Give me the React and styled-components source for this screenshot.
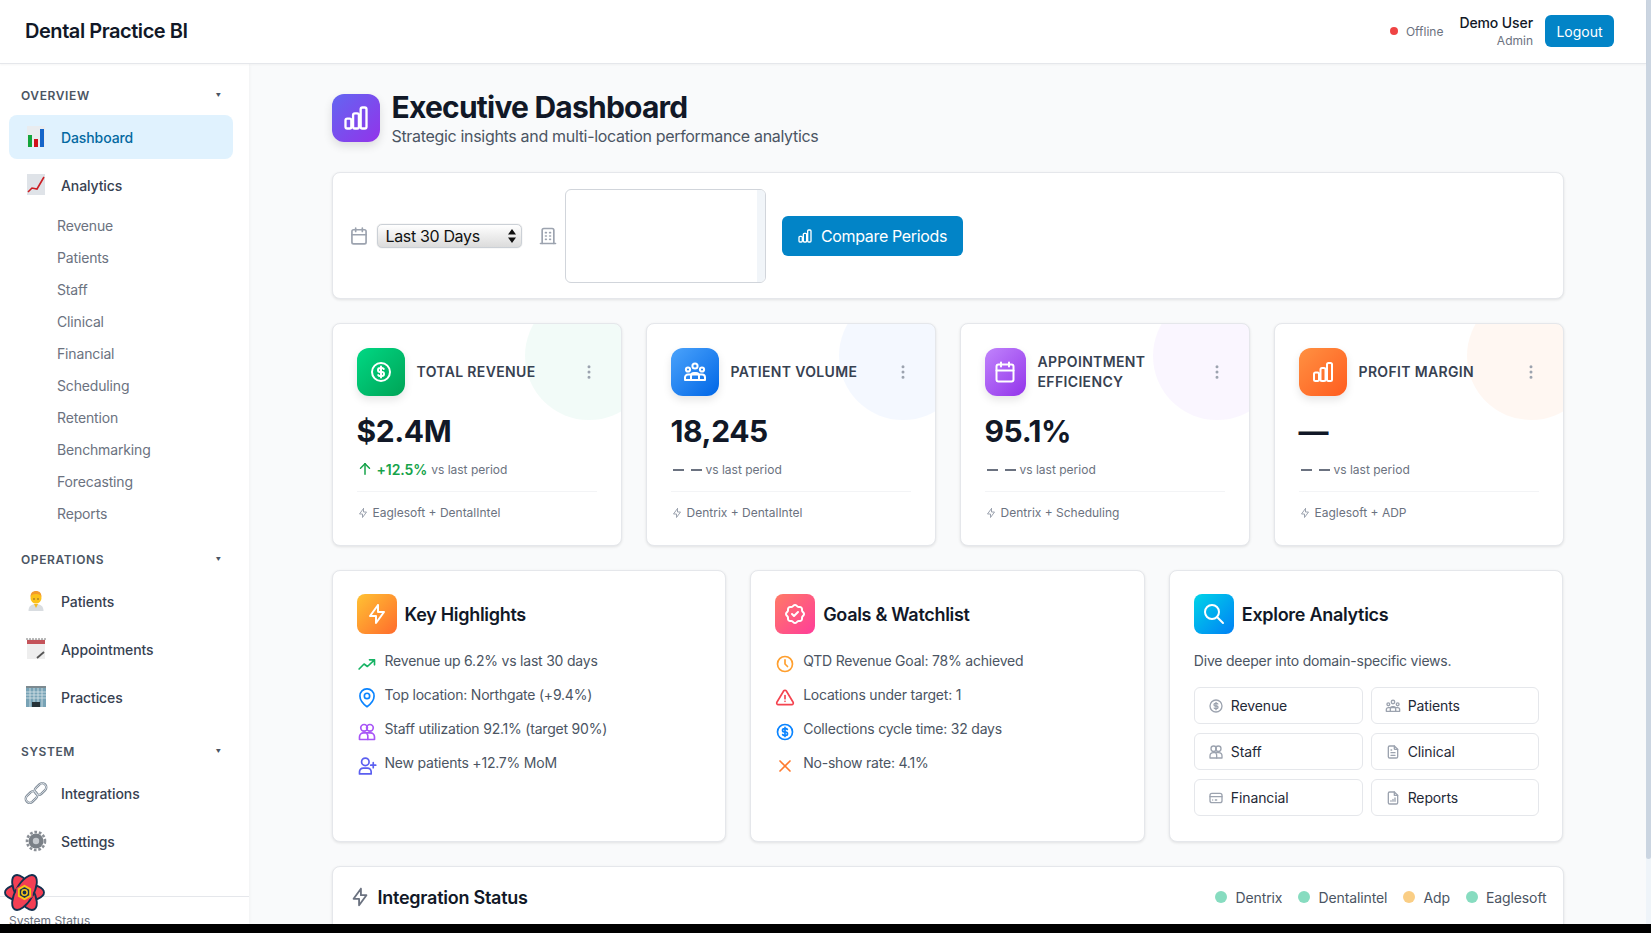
import React from "react";
import styled, { createGlobalStyle } from "styled-components";
import { TbBuilding, TbDotsVertical, TbArrowUp, TbBolt, TbRosetteDiscountCheck, TbSearch, TbClock, TbAlertTriangle, TbX, TbFileText, TbCreditCard } from "react-icons/tb";

const GlobalStyle = createGlobalStyle`
  html, body { margin: 0; padding: 0; background: #000; height: 933px; overflow: hidden; }
  * { box-sizing: border-box; }
  body { font-family: Inter, "Noto Sans", sans-serif; color: #111827; }
`;

const Viewport = styled.div`display: flex; height: 924px; overflow: hidden; background: #f9fafb;`;
const Page = styled.div`flex: 1; min-width: 0; display: flex; flex-direction: column;`;
const ScrollTrack = styled.div`width: 5px; background: #eff4f9;`;
const ScrollThumb = styled.div`height: 859px; background: #cbd5e1; border-radius: 0 0 3px 3px;`;

const Header = styled.header`
  height: 64px; flex: none; background: #fff; border-bottom: 1px solid #e5e7eb;
  display: flex; align-items: center; justify-content: space-between; padding: 0 32px 1px 25px;
  box-shadow: 0 1px 2px rgba(0,0,0,.04); position: relative; z-index: 2;
`;
const Brand = styled.div`font-size: 20px; font-weight: 600; letter-spacing: -.45px; color: #111827;`;
const HeaderRight = styled.div`display: flex; align-items: center;`;
const Status = styled.div`display: flex; align-items: center; gap: 8px; font-size: 12px; color: #6b7280; margin-right: 16px;`;
const StatusDot = styled.span`width: 8px; height: 8px; border-radius: 50%; background: #ef4444;`;
const UserBox = styled.div`display: flex; flex-direction: column; align-items: flex-end; margin-right: 12px;`;
const UserName = styled.div`font-size: 14px; font-weight: 500; line-height: 20px; letter-spacing: -.1px; color: #111827;`;
const UserRole = styled.div`font-size: 12px; line-height: 16px; color: #6b7280;`;
const LogoutButton = styled.button`
  width: 69px; height: 32px; border: 0; border-radius: 6px; background: #0284c7; color: #fff;
  font: 400 14px Inter, sans-serif; padding: 0;
`;

const Body = styled.div`flex: 1; min-height: 0; display: flex;`;
const Sidebar = styled.aside`
  width: 249px; flex: none; background: #fff; display: flex; flex-direction: column;
  box-shadow: 1px 0 3px rgba(0,0,0,.03); position: relative; z-index: 1;
`;
const SideNav = styled.nav`flex: 1; padding: 21px 16px 0 9px; overflow: hidden;`;
const SectionHead = styled.div`
  display: flex; align-items: center; justify-content: space-between; height: 20px; padding: 0 12px;
  font-size: 12px; font-weight: 600; letter-spacing: .6px; color: #4b5563; margin-bottom: 10px;
  margin-top: ${p => p.$mt || 0}px;
`;
const Caret = styled.span`font-size: 5px; color: #4b5563; letter-spacing: 0;`;
const NavItem = styled.div`
  height: 44px; margin-bottom: 4px; border-radius: 8px; display: flex; align-items: center; padding: 0 16px 0 17px; gap: 15px;
  font-size: 14px; font-weight: 500; letter-spacing: -.1px; color: ${p => p.$active ? "#0369a1" : "#374151"};
  background: ${p => p.$active ? "#e0f2fe" : "transparent"};
`;
const SubList = styled.div`margin-top: -2px;`;
const SubItem = styled.div`height: 32px; display: flex; align-items: center; padding-left: 48px; font-size: 14px; letter-spacing: -.15px; color: #6b7280;`;
const SideFooter = styled.div`
  height: 28px; flex: none; border-top: 1px solid #e5e7eb; padding: 16px 9px 0; font-size: 12px; line-height: 16px; color: #6b7280; overflow: hidden;
`;
const DevLogo = styled.svg`position: fixed; left: 4px; bottom: 21px; z-index: 5;`;
const Emoji = styled.svg`width: 20px; height: 22px; flex: none; overflow: visible;`;

const Main = styled.main`flex: 1; min-width: 0; overflow: hidden;`;
const Container = styled.div`width: 1232px; margin: 0 auto; padding-top: 27px;`;
const TitleRow = styled.div`display: flex; align-items: center; gap: 12px; margin-bottom: 24px;`;
const TitleIcon = styled.div`
  width: 48px; height: 48px; margin-top: -4px; border-radius: 12px; color: #fff; font-size: 28px;
  display: flex; align-items: center; justify-content: center;
  background: linear-gradient(135deg, #6366f1, #9333ea); box-shadow: 0 4px 10px rgba(0,0,0,.12);
`;
const TitleText = styled.div`display: flex; flex-direction: column;`;
const H1 = styled.h1`margin: 0; font-size: 30px; line-height: 32px; font-weight: 700; letter-spacing: -.78px; color: #111827;`;
const Subtitle = styled.p`margin: 1px 0 0; font-size: 16px; line-height: 24px; letter-spacing: -.32px; color: #4b5563;`;

const Card = styled.section`
  background: #fff; border: 1px solid #e5e7eb; border-radius: 8px; box-shadow: 0 1px 3px rgba(0,0,0,.1);
`;
const FilterCard = styled(Card)`
  height: 127px; padding: 0 16px; display: flex; align-items: center; margin-bottom: 24px;
`;
const FilterIcon = styled.span`display: flex; color: #9ca3af; font-size: 20px;`;
const SelectWrap = styled.div`position: relative; margin: 0 16px 0 8px;`;
const NativeSelect = styled.select`
  appearance: none; width: 145px; height: 24px; border: 1px solid #cbd0d6; border-radius: 5px; padding: 0 0 0 8px;
  font: 400 16px Inter, sans-serif; letter-spacing: -.35px; color: #111; background: linear-gradient(#fff, #f0f0f0 40%, #dcdcdc);
  box-shadow: 0 0 1px rgba(0,0,0,.3); display: block;
`;
const SelectArrows = styled.svg`position: absolute; right: 6px; top: 5px; pointer-events: none;`;
const LocationList = styled.div`
  width: 201px; height: 94px; margin-left: 7px; border: 1px solid #d1d5db; border-radius: 6px; background: #fff;
  display: flex; justify-content: flex-end; overflow: hidden;
`;
const ListTrack = styled.div`width: 8px; background: #f1f5f9;`;
const CompareButton = styled.button`
  margin-left: 16px; width: 181px; height: 40px; border: 0; border-radius: 6px; background: #0284c7; color: #fff;
  display: flex; align-items: center; justify-content: center; gap: 8px; font: 400 16px Inter, sans-serif; letter-spacing: -.35px; padding: 0;
  svg { font-size: 16px; }
`;

const MetricGrid = styled.div`display: grid; grid-template-columns: repeat(4, 1fr); gap: 24px; margin-bottom: 24px;`;
const MetricCard = styled(Card)`position: relative; overflow: hidden; height: 223px; padding: 24px;`;
const Blob = styled.div`
  position: absolute; top: -32px; right: -32px; width: 128px; height: 128px; border-radius: 50%;
  background: ${p => p.$bg}; opacity: .055;
`;
const MetricHead = styled.div`position: relative; display: flex; align-items: center; gap: 12px; margin-bottom: 17px;`;
const MetricIcon = styled.div`
  width: ${p => p.$w || 48}px; height: 48px; flex: none; border-radius: 12px; color: #fff; font-size: 24px;
  display: flex; align-items: center; justify-content: center; background: ${p => p.$bg};
  box-shadow: 0 4px 8px rgba(0,0,0,.1);
`;
const MetricTitle = styled.div`
  flex: none; max-width: ${p => p.$wrap ? "125px" : "none"}; font-size: 14px; line-height: 20px; font-weight: 600;
  letter-spacing: .35px; color: #374151; text-transform: uppercase;
`;
const MoreBtn = styled.span`margin-left: auto; margin-right: -1px; display: flex; color: #9ca3af; font-size: 18px;`;
const MetricValue = styled.div`font-size: 30px; line-height: 36px; font-weight: 700; letter-spacing: -.4px; color: #111827; margin-bottom: 5px;`;
const ChangeRow = styled.div`display: flex; align-items: center; height: 30px; gap: 4px; font-size: 12px; color: #6b7280;`;
const ChangeValue = styled.span`
  display: flex; align-items: center; gap: 3px; font-size: 14px; font-weight: 600; letter-spacing: -.1px; color: #16a34a;
  svg { font-size: 18px; margin-left: -1px; }
`;
const Dashes = styled.span`display: flex; align-items: center; gap: 7px; padding: 1px 0 0 2px;`;
const Dash = styled.span`width: 11px; height: 2px; background: #6b7280;`;
const MetricFoot = styled.div`
  border-top: 1px solid #f3f4f6; margin-top: 7px; padding-top: 13px; display: flex; align-items: center; gap: 4px;
  font-size: 12px; line-height: 16px; color: #6b7280; svg { color: #9ca3af; font-size: 12px; }
`;

const InfoGrid = styled.div`display: grid; grid-template-columns: repeat(3, 1fr); gap: 24px; margin-bottom: 24px;`;
const InfoCard = styled(Card)`height: 272px; padding: 23px 23px 23px 24px;`;
const InfoHead = styled.div`display: flex; align-items: center; gap: 8px; margin-bottom: 17px;`;
const InfoIcon = styled.div`
  width: 40px; height: 40px; border-radius: 8px; color: #fff; font-size: 24px;
  display: flex; align-items: center; justify-content: center; background: ${p => p.$bg};
`;
const InfoTitle = styled.h3`margin: 0; font-size: 18px; font-weight: 600; letter-spacing: -.3px; color: #111827;`;
const InfoList = styled.ul`list-style: none; margin: 0; padding: 0; display: flex; flex-direction: column; gap: 11px;`;
const InfoRow = styled.li`
  display: flex; gap: 8px; font-size: 14px; line-height: 20px; letter-spacing: -.21px; color: #4b5563;
  svg { flex: none; margin-top: 3px; font-size: 20px; color: ${p => p.$c}; }
`;
const ExploreText = styled.p`margin: 0 0 16px; font-size: 14px; line-height: 20px; letter-spacing: -.21px; color: #4b5563;`;
const ExploreGrid = styled.div`display: grid; grid-template-columns: 1fr 1fr; gap: 9px 8px;`;
const ExploreBtn = styled.div`
  height: 37px; border: 1px solid #e5e7eb; border-radius: 6px; background: #fff; display: flex; align-items: center; gap: 7px;
  padding-left: 13px; font-size: 14px; letter-spacing: -.12px; color: #1f2937; svg { font-size: 16px; color: #9ca3af; }
`;

const StatusCard = styled(Card)`display: flex; align-items: center; justify-content: space-between; height: 62px; padding: 0 16px; border-bottom-left-radius: 0; border-bottom-right-radius: 0;`;
const StatusTitle = styled.div`display: flex; align-items: center; gap: 7px; font-size: 18px; font-weight: 600; letter-spacing: -.25px; color: #111827; svg { font-size: 22px; color: #6b7280; }`;
const Sources = styled.div`display: flex; gap: 16px;`;
const Source = styled.div`display: flex; align-items: center; gap: 8px; font-size: 14px; letter-spacing: -.1px; color: #4b5563;`;
const SourceDot = styled.span`width: 12px; height: 12px; border-radius: 50%; background: ${p => p.$c}; opacity: .5;`;

const Line = ({ children }) => (
  <svg width="1em" height="1em" viewBox="0 0 24 24" fill="none" stroke="currentColor" strokeWidth="2" strokeLinecap="round" strokeLinejoin="round">{children}</svg>
);
const DollarCircle = () => <Line><circle cx="12" cy="12" r="9"/><path d="M14.8 9a2 2 0 0 0-1.8-1h-2a2 2 0 0 0 0 4h2a2 2 0 0 1 0 4h-2a2 2 0 0 1-1.8-1M12 6.5v11"/></Line>;
const TwoUsers = () => <Line><circle cx="8.5" cy="7" r="4"/><circle cx="15.5" cy="7" r="4"/><path d="M3 21v-3a5 5 0 0 1 5-5h8a5 5 0 0 1 5 5v3z"/><path d="M12 14a5 5 0 0 1 1 4v3"/></Line>;
const RisingBars = () => <Line><rect x="3" y="12.5" width="5" height="8.5" rx="1.5"/><rect x="9.5" y="8" width="5" height="13" rx="1.5"/><rect x="16" y="3" width="5" height="18" rx="1.5"/></Line>;
const Calendar = () => <Line><rect x="3.5" y="4.5" width="17" height="17" rx="2"/><path d="M8 2.5v4M16 2.5v4M3.5 10.5h17"/></Line>;
const Group = () => <Line><circle cx="12" cy="6" r="2.6"/><circle cx="5" cy="9.5" r="2.1"/><circle cx="19" cy="9.5" r="2.1"/><path d="M2 20v-2.5a3 3 0 0 1 3-3h14a3 3 0 0 1 3 3V20z"/><path d="M8 20v-4a3 3 0 0 1 3-3h2a3 3 0 0 1 3 3v4"/></Line>;
const Trending = () => <Line><path d="M2.5 18l6-6 4 3 8.500-8M15 7h6v6"/></Line>;
const Pin = () => <Line><path d="M12 22.5s8.500-6.500 8.500-13a8.500 8.500 0 1 0-17 0c0 6.500 8.500 13 8.500 13z"/><circle cx="12" cy="9.5" r="3.2"/></Line>;
const AddUser = () => <Line><circle cx="10" cy="7" r="4.5"/><path d="M3 21.5V19a4.5 4.5 0 0 1 4.5-4.5h5A4.5 4.5 0 0 1 17 19v2.5z"/><path d="M19.5 8v6M16.5 11h6"/></Line>;
const ReportFile = () => <Line><path d="M14 3H7a2 2 0 0 0-2 2v14a2 2 0 0 0 2 2h10a2 2 0 0 0 2-2V8z"/><path d="M14 3v5h5M9 17v-1M12 17v-3M15 17v-5"/></Line>;

const icons = {
  bars: <Emoji viewBox="0 0 20 22"><rect x="1" y="0" width="18" height="21" fill="#e9ecef"/><rect x="2" y="9" width="4" height="12" fill="#12a53c"/><rect x="8" y="13" width="4" height="8" fill="#d0131b"/><rect x="14" y="3" width="4" height="18" fill="#1565c9"/></Emoji>,
  chart: <Emoji viewBox="0 0 20 22"><rect x="1" y="0" width="18" height="21" fill="#dfe3e8"/><path d="M2 18 L6 14 L11 15 L18 3" fill="none" stroke="#cc1f25" strokeWidth="1.6"/></Emoji>,
  doctor: <Emoji viewBox="0 0 20 22"><path d="M2.5 21c0-5 3-7 7.500-7s7.500 2 7.500 7z" fill="#d9dde1"/><path d="M8 14l2 4 2-4z" fill="#f5b921"/><circle cx="10" cy="8" r="5.5" fill="#fcc21b"/><path d="M4.5 7c0-4 2-6 5.500-6s5.500 2 5.500 6c-1-2-2-3-5.500-3s-4.500 1-5.500 3z" fill="#f39a2b"/><circle cx="8" cy="9" r=".7" fill="#5d4037"/><circle cx="12" cy="9" r=".7" fill="#5d4037"/></Emoji>,
  memo: <Emoji viewBox="0 0 20 22"><rect x="1" y="1" width="18" height="20" fill="#eeeeee"/><rect x="1" y="2" width="18" height="4" fill="#c4535a"/><path d="M1 0v2M4 0v2M7 0v2M10 0v2M13 0v2M16 0v2M19 0v2" stroke="#555" strokeWidth=".8"/><path d="M11 20 L18 14" stroke="#555" strokeWidth="1.8"/></Emoji>,
  office: <Emoji viewBox="0 0 20 22"><rect x="0" y="0" width="20" height="3" fill="#7d8a90"/><rect x="0" y="2" width="20" height="19" fill="#78a3b6"/><path d="M0 6h20M0 9h20M0 12h20M4 2v19M8 2v19M12 2v19M16 2v19" stroke="#d8e4e8" strokeWidth=".8"/><rect x="6" y="16" width="8" height="5" fill="#263238"/></Emoji>,
  link: <Emoji viewBox="0 0 20 22"><g fill="none"><rect x="-1" y="11" width="13" height="8" rx="4" transform="rotate(-45 5.5 15)" stroke="#7e8a96" strokeWidth="2.4"/><rect x="8" y="3" width="13" height="8" rx="4" transform="rotate(-45 14.5 7)" stroke="#7e8a96" strokeWidth="2.4"/><rect x="-1" y="11" width="13" height="8" rx="4" transform="rotate(-45 5.5 15)" stroke="#dfe5ea" strokeWidth=".9"/><rect x="8" y="3" width="13" height="8" rx="4" transform="rotate(-45 14.5 7)" stroke="#dfe5ea" strokeWidth=".9"/></g></Emoji>,
  gear: <Emoji viewBox="0 0 20 22"><circle cx="10" cy="11" r="9" fill="none" stroke="#8a8f96" strokeWidth="2.6" strokeDasharray="2.7 1.8"/><circle cx="10" cy="11" r="7.5" fill="#7a8087"/><circle cx="10" cy="11" r="3.2" fill="#c5c9ce"/></Emoji>,
};

const metrics = [
  { t: "Total Revenue", v: "$2.4M", up: "+12.5%", f: "Eaglesoft + DentalIntel", i: <DollarCircle />, bg: "linear-gradient(135deg,#00d884,#00a356)", blob: "#10b981" },
  { t: "Patient Volume", v: "18,245", f: "Dentrix + DentalIntel", i: <Group />, bg: "linear-gradient(135deg,#4ba3fb,#0066e6)", blob: "#3b82f6" },
  { t: "Appointment Efficiency", v: "95.1%", f: "Dentrix + Scheduling", i: <Calendar />, bg: "linear-gradient(135deg,#c084fc,#9333ea)", blob: "#a855f7", wrap: true, w: 41 },
  { t: "Profit Margin", v: "—", f: "Eaglesoft + ADP", i: <RisingBars />, bg: "linear-gradient(135deg,#ff9142,#ff5c1f)", blob: "#f97316" },
];

const SUBS = ["Revenue","Patients","Staff","Clinical","Financial","Scheduling","Retention","Benchmarking","Forecasting","Reports"];

export default function App() {
  return (
    <>
      <GlobalStyle />
      <Viewport>
        <Page>
          <Header>
            <Brand>Dental Practice BI</Brand>
            <HeaderRight>
              <Status><StatusDot />Offline</Status>
              <UserBox><UserName>Demo User</UserName><UserRole>Admin</UserRole></UserBox>
              <LogoutButton>Logout</LogoutButton>
            </HeaderRight>
          </Header>
          <Body>
            <Sidebar>
              <SideNav>
                <SectionHead>OVERVIEW<Caret>▼</Caret></SectionHead>
                <NavItem $active>{icons.bars}Dashboard</NavItem>
                <NavItem>{icons.chart}Analytics</NavItem>
                <SubList>{SUBS.map(s => <SubItem key={s}>{s}</SubItem>)}</SubList>
                <SectionHead $mt={20}>OPERATIONS<Caret>▼</Caret></SectionHead>
                <NavItem>{icons.doctor}Patients</NavItem>
                <NavItem>{icons.memo}Appointments</NavItem>
                <NavItem>{icons.office}Practices</NavItem>
                <SectionHead $mt={22}>SYSTEM<Caret>▼</Caret></SectionHead>
                <NavItem>{icons.link}Integrations</NavItem>
                <NavItem>{icons.gear}Settings</NavItem>
              </SideNav>
              <SideFooter>System Status</SideFooter>
            </Sidebar>
            <Main>
              <Container>
                <TitleRow>
                  <TitleIcon><RisingBars /></TitleIcon>
                  <TitleText>
                    <H1>Executive Dashboard</H1>
                    <Subtitle>Strategic insights and multi-location performance analytics</Subtitle>
                  </TitleText>
                </TitleRow>
                <FilterCard>
                  <FilterIcon><Calendar /></FilterIcon>
                  <SelectWrap>
                    <NativeSelect defaultValue="30"><option value="30">Last 30 Days</option></NativeSelect>
                    <SelectArrows width="8" height="14" viewBox="0 0 8 14"><path d="M4 0l4 5.5H0zM4 14l4-5.5H0z" fill="#111"/></SelectArrows>
                  </SelectWrap>
                  <FilterIcon><TbBuilding /></FilterIcon>
                  <LocationList><ListTrack /></LocationList>
                  <CompareButton><RisingBars />Compare Periods</CompareButton>
                </FilterCard>
                <MetricGrid>
                  {metrics.map(m => (
                    <MetricCard key={m.t}>
                      <Blob $bg={m.blob} />
                      <MetricHead>
                        <MetricIcon $bg={m.bg} $w={m.w}>{m.i}</MetricIcon>
                        <MetricTitle $wrap={m.wrap}>{m.t}</MetricTitle>
                        <MoreBtn><TbDotsVertical /></MoreBtn>
                      </MetricHead>
                      <MetricValue>{m.v}</MetricValue>
                      <ChangeRow>
                        {m.up
                          ? <ChangeValue><TbArrowUp />{m.up}</ChangeValue>
                          : <Dashes><Dash /><Dash /></Dashes>}
                        <span>vs last period</span>
                      </ChangeRow>
                      <MetricFoot><TbBolt />{m.f}</MetricFoot>
                    </MetricCard>
                  ))}
                </MetricGrid>
                <InfoGrid>
                  <InfoCard>
                    <InfoHead><InfoIcon $bg="linear-gradient(135deg,#ffc233,#ff6b2c)"><TbBolt /></InfoIcon><InfoTitle>Key Highlights</InfoTitle></InfoHead>
                    <InfoList>
                      <InfoRow $c="#16b364"><Trending />Revenue up 6.2% vs last 30 days</InfoRow>
                      <InfoRow $c="#0a84ff"><Pin />Top location: Northgate (+9.4%)</InfoRow>
                      <InfoRow $c="#a855f7"><TwoUsers />Staff utilization 92.1% (target 90%)</InfoRow>
                      <InfoRow $c="#5b5ff0"><AddUser />New patients +12.7% MoM</InfoRow>
                    </InfoList>
                  </InfoCard>
                  <InfoCard>
                    <InfoHead><InfoIcon $bg="linear-gradient(135deg,#ff7a66,#ff3d9a)"><TbRosetteDiscountCheck /></InfoIcon><InfoTitle>Goals &amp; Watchlist</InfoTitle></InfoHead>
                    <InfoList>
                      <InfoRow $c="#ff9f2e"><TbClock />QTD Revenue Goal: 78% achieved</InfoRow>
                      <InfoRow $c="#f4434f"><TbAlertTriangle />Locations under target: 1</InfoRow>
                      <InfoRow $c="#0a84ff"><DollarCircle />Collections cycle time: 32 days</InfoRow>
                      <InfoRow $c="#ff7a2e"><TbX />No-show rate: 4.1%</InfoRow>
                    </InfoList>
                  </InfoCard>
                  <InfoCard>
                    <InfoHead><InfoIcon $bg="linear-gradient(135deg,#00d4e8,#0080f5)"><TbSearch /></InfoIcon><InfoTitle>Explore Analytics</InfoTitle></InfoHead>
                    <ExploreText>Dive deeper into domain-specific views.</ExploreText>
                    <ExploreGrid>
                      <ExploreBtn><DollarCircle />Revenue</ExploreBtn>
                      <ExploreBtn><Group />Patients</ExploreBtn>
                      <ExploreBtn><TwoUsers />Staff</ExploreBtn>
                      <ExploreBtn><TbFileText />Clinical</ExploreBtn>
                      <ExploreBtn><TbCreditCard />Financial</ExploreBtn>
                      <ExploreBtn><ReportFile />Reports</ExploreBtn>
                    </ExploreGrid>
                  </InfoCard>
                </InfoGrid>
                <StatusCard>
                  <StatusTitle><TbBolt />Integration Status</StatusTitle>
                  <Sources>
                    <Source><SourceDot $c="#10b981" />Dentrix</Source>
                    <Source><SourceDot $c="#10b981" />Dentalintel</Source>
                    <Source><SourceDot $c="#f59e0b" />Adp</Source>
                    <Source><SourceDot $c="#10b981" />Eaglesoft</Source>
                  </Sources>
                </StatusCard>
              </Container>
            </Main>
          </Body>
        </Page>
        <ScrollTrack><ScrollThumb /></ScrollTrack>
      </Viewport>
      <DevLogo width="41" height="39" viewBox="0 0 40 38">
        <g fill="#f43f54" stroke="#14304f" strokeWidth="1.8">
          <ellipse cx="20" cy="19" rx="19" ry="8.5"/>
          <ellipse cx="20" cy="19" rx="19" ry="8.5" transform="rotate(60 20 19)"/>
          <ellipse cx="20" cy="19" rx="19" ry="8.5" transform="rotate(120 20 19)"/>
        </g>
        <path d="M20 10l8 4.500v9l-8 4.500-8-4.500v-9z" fill="#f43f54"/>
        <path d="M20 12.500l5.500 3.200v6.600L20 25.500l-5.500-3.200v-6.600z" fill="#14304f" stroke="#f5c518" strokeWidth="1.8"/>
        <circle cx="20" cy="19" r="2.6" fill="none" stroke="#f5c518" strokeWidth="1.5"/>
      </DevLogo>
    </>
  );
}
